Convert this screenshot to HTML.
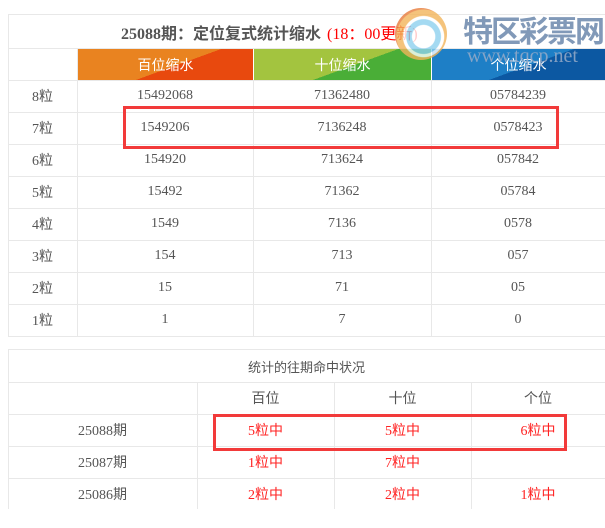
<!DOCTYPE html>
<html><head><meta charset="utf-8"><style>
body{margin:0;width:605px;height:528px;background:#fff;overflow:hidden;position:relative;font-family:"Liberation Serif","Noto Sans CJK SC",serif;color:#555;}
.a{position:absolute;}
.c{position:absolute;display:flex;align-items:center;justify-content:center;font-size:14px;}
.hl{position:absolute;height:1px;background:#e8e8e8;}
.vl{position:absolute;width:1px;background:#e8e8e8;}
.box{position:absolute;border:3px solid #f23a3a;box-sizing:border-box;}
.r{color:#f22;}
.h{color:#fff;font-family:"Liberation Sans","Noto Sans CJK SC",sans-serif;font-size:14px;}
</style></head><body>
<div class="hl" style="left:8px;top:14px;width:597px"></div>
<div class="hl" style="left:8px;top:48px;width:597px"></div>
<div class="vl" style="left:8px;top:14px;height:322px"></div>
<div class="vl" style="left:77px;top:48px;height:288px"></div>
<div class="vl" style="left:253px;top:80px;height:256px"></div>
<div class="vl" style="left:431px;top:80px;height:256px"></div>
<div class="hl" style="left:8px;top:80px;width:597px"></div>
<div class="hl" style="left:8px;top:112px;width:597px"></div>
<div class="hl" style="left:8px;top:144px;width:597px"></div>
<div class="hl" style="left:8px;top:176px;width:597px"></div>
<div class="hl" style="left:8px;top:208px;width:597px"></div>
<div class="hl" style="left:8px;top:240px;width:597px"></div>
<div class="hl" style="left:8px;top:272px;width:597px"></div>
<div class="hl" style="left:8px;top:304px;width:597px"></div>
<div class="hl" style="left:8px;top:336px;width:597px"></div>
<div class="c" style="left:8px;top:15px;width:597px;height:33px;font-size:16px;font-weight:bold;color:#555;justify-content:flex-start;padding-left:113px;box-sizing:border-box">25088期：定位复式统计缩水<span style="color:#f00;font-weight:normal;margin-left:6px">(18：00更新)</span></div>
<div class="c h" style="left:78px;top:49px;width:175px;height:31px;background:linear-gradient(160deg,#e98320 0%,#e98320 55%,#e8490e 55%,#e8490e 100%)">百位缩水</div>
<div class="c h" style="left:254px;top:49px;width:177px;height:31px;background:linear-gradient(160deg,#a3c43f 0%,#a3c43f 55%,#4aae37 55%,#4aae37 100%)">十位缩水</div>
<div class="c h" style="left:432px;top:49px;width:173px;height:31px;background:linear-gradient(160deg,#1e7fc6 0%,#1e7fc6 55%,#0c58a2 55%,#0c58a2 100%)">个位缩水</div>
<div class="a" style="left:395px;top:8px;width:52px;height:52px;border-radius:50%;background:radial-gradient(circle at 55% 55%,#fff 0 28%,#8dd0ee 30% 42%,#fff 44% 50%,#f2b45a 52% 66%,#e77a3a 68% 80%,#f6d9b8 82% 100%);opacity:.8"></div>
<div class="a" style="left:463px;top:11px;font-family:'Noto Sans CJK SC',sans-serif;font-weight:bold;font-size:30px;line-height:36px;color:#8199b8;letter-spacing:-2px">特区彩票网</div>
<div class="a" style="left:467px;top:45px;font-family:'Liberation Serif',serif;font-size:20px;line-height:22px;color:rgba(150,170,200,.85)">www.tqcp.net</div>
<div class="c" style="left:8px;top:80px;width:69px;height:32px">8粒</div><div class="c" style="left:77px;top:80px;width:176px;height:32px">15492068</div><div class="c" style="left:253px;top:80px;width:178px;height:32px">71362480</div><div class="c" style="left:431px;top:80px;width:174px;height:32px">05784239</div>
<div class="c" style="left:8px;top:112px;width:69px;height:32px">7粒</div><div class="c" style="left:77px;top:112px;width:176px;height:32px">1549206</div><div class="c" style="left:253px;top:112px;width:178px;height:32px">7136248</div><div class="c" style="left:431px;top:112px;width:174px;height:32px">0578423</div>
<div class="c" style="left:8px;top:144px;width:69px;height:32px">6粒</div><div class="c" style="left:77px;top:144px;width:176px;height:32px">154920</div><div class="c" style="left:253px;top:144px;width:178px;height:32px">713624</div><div class="c" style="left:431px;top:144px;width:174px;height:32px">057842</div>
<div class="c" style="left:8px;top:176px;width:69px;height:32px">5粒</div><div class="c" style="left:77px;top:176px;width:176px;height:32px">15492</div><div class="c" style="left:253px;top:176px;width:178px;height:32px">71362</div><div class="c" style="left:431px;top:176px;width:174px;height:32px">05784</div>
<div class="c" style="left:8px;top:208px;width:69px;height:32px">4粒</div><div class="c" style="left:77px;top:208px;width:176px;height:32px">1549</div><div class="c" style="left:253px;top:208px;width:178px;height:32px">7136</div><div class="c" style="left:431px;top:208px;width:174px;height:32px">0578</div>
<div class="c" style="left:8px;top:240px;width:69px;height:32px">3粒</div><div class="c" style="left:77px;top:240px;width:176px;height:32px">154</div><div class="c" style="left:253px;top:240px;width:178px;height:32px">713</div><div class="c" style="left:431px;top:240px;width:174px;height:32px">057</div>
<div class="c" style="left:8px;top:272px;width:69px;height:32px">2粒</div><div class="c" style="left:77px;top:272px;width:176px;height:32px">15</div><div class="c" style="left:253px;top:272px;width:178px;height:32px">71</div><div class="c" style="left:431px;top:272px;width:174px;height:32px">05</div>
<div class="c" style="left:8px;top:304px;width:69px;height:32px">1粒</div><div class="c" style="left:77px;top:304px;width:176px;height:32px">1</div><div class="c" style="left:253px;top:304px;width:178px;height:32px">7</div><div class="c" style="left:431px;top:304px;width:174px;height:32px">0</div>
<div class="box" style="left:123px;top:106px;width:436px;height:43px"></div>
<div class="hl" style="left:8px;top:349px;width:597px"></div>
<div class="hl" style="left:8px;top:382px;width:597px"></div>
<div class="hl" style="left:8px;top:414px;width:597px"></div>
<div class="hl" style="left:8px;top:446px;width:597px"></div>
<div class="hl" style="left:8px;top:478px;width:597px"></div>
<div class="vl" style="left:8px;top:349px;height:160px"></div>
<div class="vl" style="left:197px;top:382px;height:127px"></div>
<div class="vl" style="left:334px;top:382px;height:127px"></div>
<div class="vl" style="left:471px;top:382px;height:127px"></div>
<div class="c" style="left:8px;top:350px;width:597px;height:32px;font-family:'Liberation Sans','Noto Sans CJK SC',sans-serif;font-size:13px">统计的往期命中状况</div>
<div class="c" style="left:197px;top:382px;width:137px;height:32px;font-family:'Liberation Sans','Noto Sans CJK SC',sans-serif">百位</div><div class="c" style="left:334px;top:382px;width:137px;height:32px;font-family:'Liberation Sans','Noto Sans CJK SC',sans-serif">十位</div><div class="c" style="left:471px;top:382px;width:134px;height:32px;font-family:'Liberation Sans','Noto Sans CJK SC',sans-serif">个位</div>
<div class="c" style="left:8px;top:414px;width:189px;height:32px">25088期</div><div class="c r" style="left:197px;top:414px;width:137px;height:32px">5粒中</div><div class="c r" style="left:334px;top:414px;width:137px;height:32px">5粒中</div><div class="c r" style="left:471px;top:414px;width:134px;height:32px">6粒中</div>
<div class="c" style="left:8px;top:446px;width:189px;height:32px">25087期</div><div class="c r" style="left:197px;top:446px;width:137px;height:32px">1粒中</div><div class="c r" style="left:334px;top:446px;width:137px;height:32px">7粒中</div>
<div class="c" style="left:8px;top:478px;width:189px;height:32px">25086期</div><div class="c r" style="left:197px;top:478px;width:137px;height:32px">2粒中</div><div class="c r" style="left:334px;top:478px;width:137px;height:32px">2粒中</div><div class="c r" style="left:471px;top:478px;width:134px;height:32px">1粒中</div>
<div class="box" style="left:213px;top:414px;width:354px;height:37px"></div>
</body></html>
